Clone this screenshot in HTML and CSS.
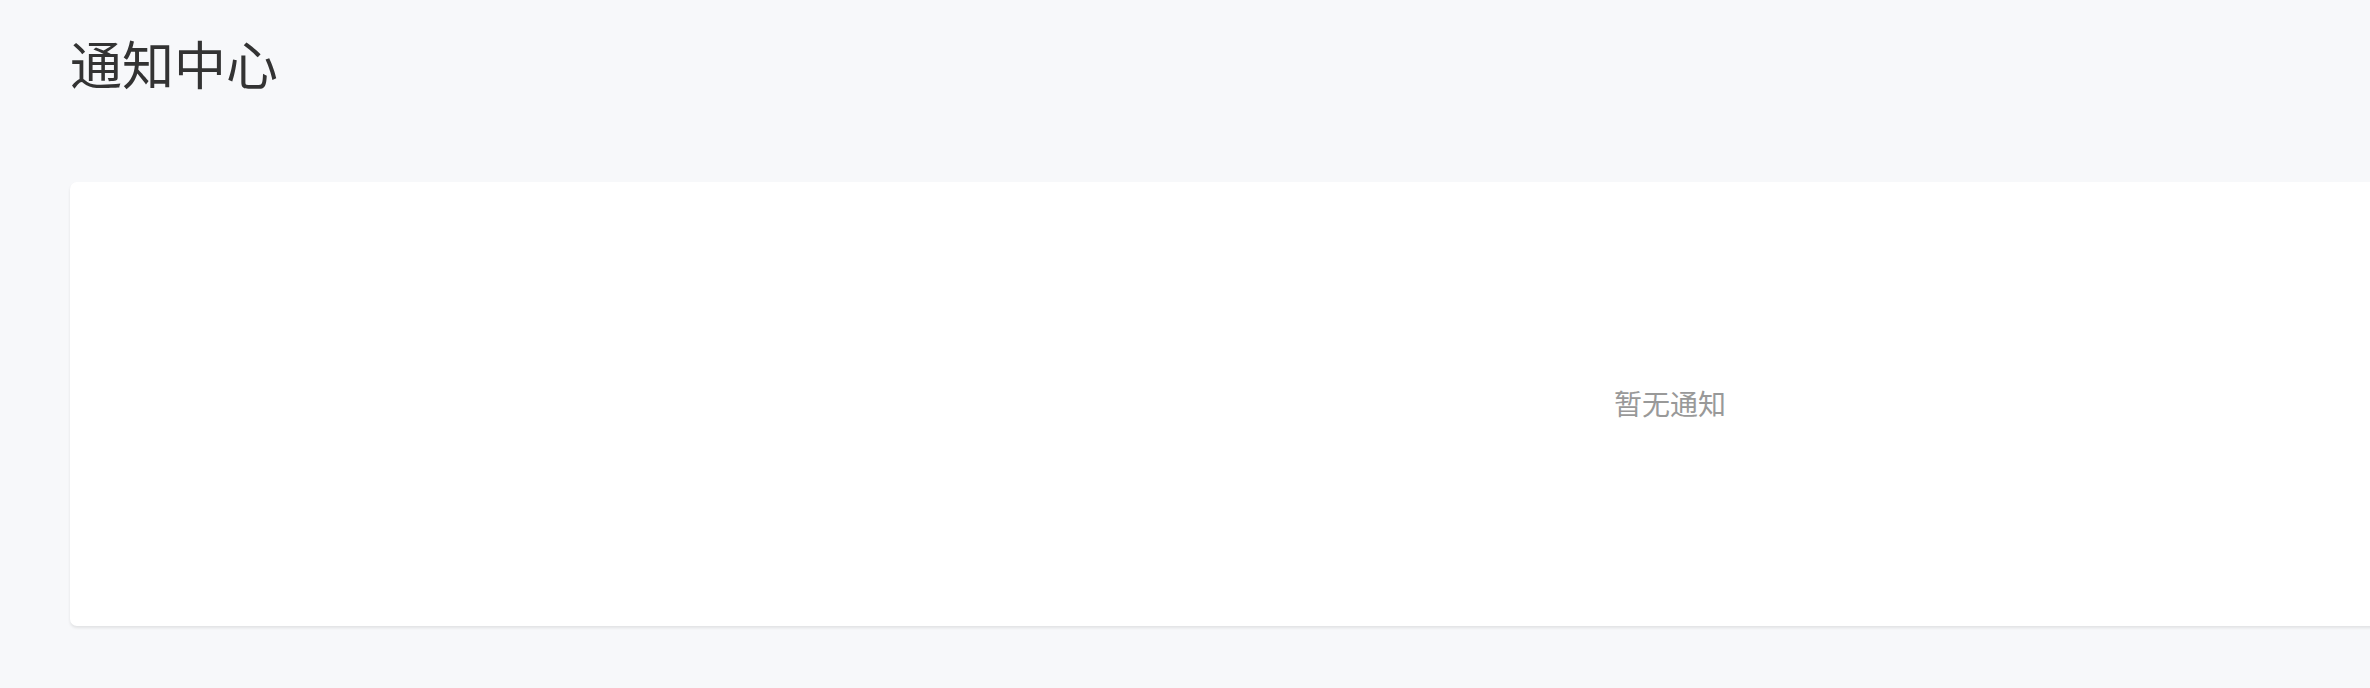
FILE: index.html
```html
<!DOCTYPE html>
<html lang="zh-CN">
<head>
<meta charset="utf-8">
<title>通知中心</title>
<link rel="stylesheet" href="styles.css">
</head>
<body>
<div class="page">
  <h1 class="title">通知中心</h1>
  <div class="card">
    <span class="empty">暂无通知</span>
  </div>
</div>
<div class="watermark" aria-hidden="true">
  <span>hR35D11G95E</span><span>hR35D11G95E</span><span>hR35D11G95E</span><span>hR35D11G95E</span><span>hR35D11G95E</span><span>hR35D11G95E</span>
  <span>hR35D11G95E</span><span>hR35D11G95E</span><span>hR35D11G95E</span><span>hR35D11G95E</span><span>hR35D11G95E</span><span>hR35D11G95E</span>
  <span>hR35D11G95E</span><span>hR35D11G95E</span><span>hR35D11G95E</span><span>hR35D11G95E</span><span>hR35D11G95E</span><span>hR35D11G95E</span>
  <span>hR35D11G95E</span><span>hR35D11G95E</span><span>hR35D11G95E</span><span>hR35D11G95E</span><span>hR35D11G95E</span><span>hR35D11G95E</span>
  <span>hR35D11G95E</span><span>hR35D11G95E</span><span>hR35D11G95E</span><span>hR35D11G95E</span><span>hR35D11G95E</span><span>hR35D11G95E</span>
  <span>hR35D11G95E</span><span>hR35D11G95E</span><span>hR35D11G95E</span><span>hR35D11G95E</span><span>hR35D11G95E</span><span>hR35D11G95E</span>
  <span>hR35D11G95E</span><span>hR35D11G95E</span><span>hR35D11G95E</span><span>hR35D11G95E</span><span>hR35D11G95E</span><span>hR35D11G95E</span>
  <span>hR35D11G95E</span><span>hR35D11G95E</span><span>hR35D11G95E</span><span>hR35D11G95E</span><span>hR35D11G95E</span><span>hR35D11G95E</span>
</div>
</body>
</html>
```
FILE: styles.css
```css
html, body {
  margin: 0;
  padding: 0;
  background: #f7f8fa;
  overflow: hidden;
}
body {
  position: relative;
  width: 2370px;
  height: 688px;
  font-family: "Noto Sans CJK SC", "Noto Sans", sans-serif;
}
.page {
  padding: 32px 0 0 70px;
  width: 3270px;
}
.title {
  margin: 0 0 88px;
  font-size: 52px;
  line-height: 62px;
  font-weight: 400;
  color: #333333;
}
.card {
  width: 3200px;
  height: 444px;
  background: #ffffff;
  border-radius: 7px;
  box-shadow: 0 2px 3px rgba(0, 0, 0, 0.09);
  display: flex;
  align-items: center;
  justify-content: center;
}
.empty {
  font-size: 28px;
  line-height: 1;
  color: #999999;
  margin-bottom: 2px;
}
.watermark {
  position: absolute;
  top: 0;
  left: 0;
  right: 0;
  bottom: 0;
  pointer-events: none;
  display: grid;
  grid-template-columns: repeat(6, 432px);
  grid-auto-rows: 92px;
  padding: 8px 0 0 50px;
  font-family: "Liberation Sans", Arial, sans-serif;
  font-size: 26px;
  color: rgba(0, 0, 0, 0.018);
  overflow: hidden;
}
```
